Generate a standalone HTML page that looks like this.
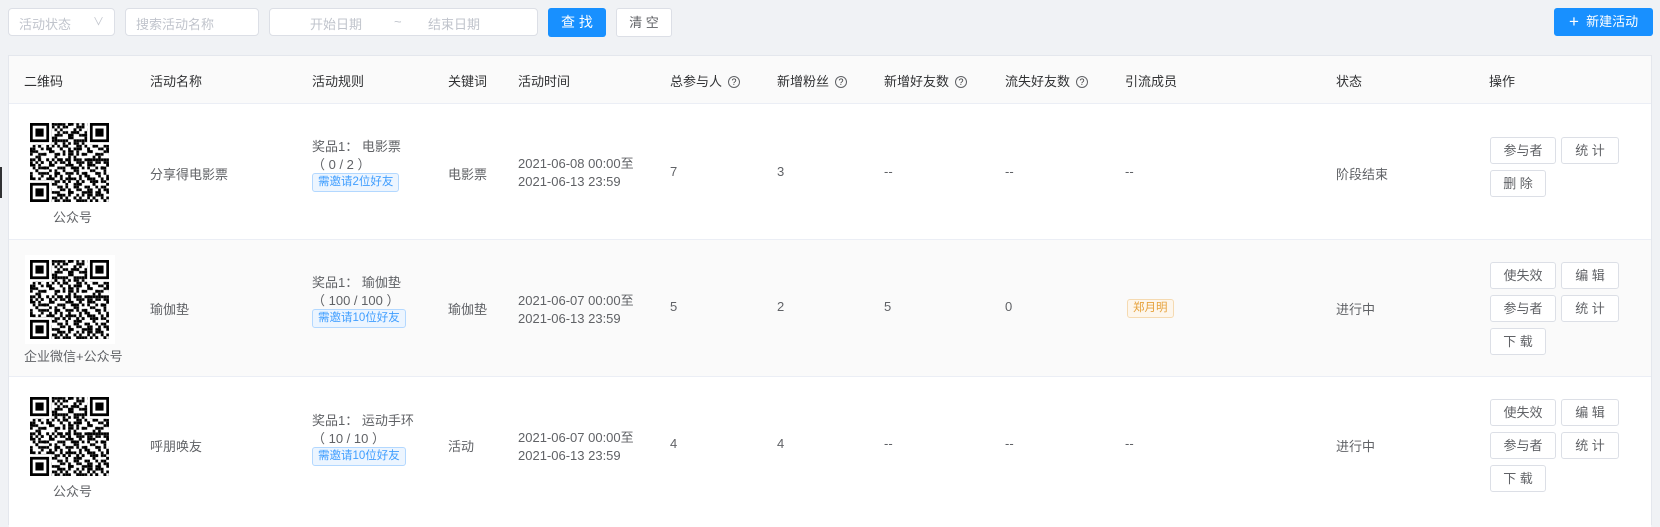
<!DOCTYPE html>
<html><head><meta charset="utf-8">
<style>
*{box-sizing:border-box;margin:0;padding:0}
body{width:1660px;height:512px;overflow:hidden;background:#f0f2f5;font-family:"Liberation Sans","Noto Sans CJK SC",sans-serif;font-size:13px;color:#606266;position:relative}
.a{position:absolute;white-space:nowrap}
.box{position:absolute;background:#fff;border:1px solid #dcdfe6;border-radius:4px}
.ph{color:#c0c4cc}
.btn{position:absolute;border:1px solid #dcdfe6;border-radius:3px;background:#fff;color:#606266;font-size:13px;text-align:center;line-height:25px;height:27px}
.table{position:absolute;left:8px;top:55px;width:1644px;height:470px;background:#fff;border:1px solid #e4e7ed}
.hd{position:absolute;left:0;top:0;width:100%;height:48px;background:#fafafa;border-bottom:1px solid #ebeef5}
.hd .a{top:15px;color:#303133}
.row{position:absolute;left:0;width:100%;border-bottom:1px solid #ebeef5}
.q{display:inline-block;width:12px;height:12px;border:1px solid #606266;border-radius:50%;font-size:9px;line-height:10px;text-align:center;margin-left:6px;vertical-align:1px;color:#303133}
.tag{position:absolute;height:19px;line-height:17px;font-size:11.5px;padding:0 5px;border-radius:3px;border:1px solid #b3d8ff;background:#ecf5ff;color:#409eff}
.tag.o{border-color:#f5dab1;background:#fdf6ec;color:#e6a23c}
</style></head><body>
<svg width="0" height="0" style="position:absolute">
<defs>
<pattern id="p1" width="7" height="5" patternUnits="userSpaceOnUse"><path d="M0 0h2v1h-2zM3 1h1v1h-1zM5 1h1v1h-1zM2 2h1v1h-1zM6 3h1v1h-1zM3 3h1v1h-1zM0 4h1v1h-1zM4 4h1v1h-1z" fill="#000"/></pattern>
<pattern id="p2" width="5" height="7" patternUnits="userSpaceOnUse" x="2" y="1"><path d="M1 0h1v1h-1zM4 1h1v1h-1zM0 2h1v1h-1zM2 3h2v1h-2zM1 5h1v1h-1zM4 5h1v1h-1zM0 6h1v1h-1zM2 6h1v1h-1z" fill="#000"/></pattern>
<pattern id="p3" width="11" height="13" patternUnits="userSpaceOnUse" x="1" y="3"><path d="M3 0h2v1h-2zM8 2h1v2h-1zM0 5h1v1h-1zM5 6h2v1h-2zM2 9h1v2h-1zM9 10h2v1h-2zM6 12h1v1h-1z" fill="#000"/></pattern>
<symbol id="qr" viewBox="0 0 29 29">
<rect width="29" height="29" fill="#fff"/>
<rect width="29" height="29" fill="url(#p1)"/><rect width="29" height="29" fill="url(#p2)"/><rect width="29" height="29" fill="url(#p3)"/>
<g><rect x="0" y="0" width="8" height="8" fill="#fff"/><rect x="21" y="0" width="8" height="8" fill="#fff"/><rect x="0" y="21" width="8" height="8" fill="#fff"/>
<path d="M0 0h7v7h-7zM1 1v5h5v-5zM2 2h3v3h-3zM22 0h7v7h-7zM23 1v5h5v-5zM24 2h3v3h-3zM0 22h7v7h-7zM1 23v5h5v-5zM2 24h3v3h-3z" fill="#000" fill-rule="evenodd"/></g>
</symbol>
</defs></svg>

<div class="box" style="left:8px;top:8px;width:107px;height:28px"><span class="a ph" style="left:10px;top:5px">活动状态</span><span class="a ph" style="left:84px;top:4px;font-size:11px">∨</span></div>
<div class="box" style="left:125px;top:8px;width:134px;height:28px"><span class="a ph" style="left:10px;top:5px">搜索活动名称</span></div>
<div class="box" style="left:269px;top:8px;width:269px;height:28px"><span class="a ph" style="left:40px;top:5px">开始日期</span><span class="a ph" style="left:124px;top:5px">~</span><span class="a ph" style="left:158px;top:5px">结束日期</span></div>
<div class="a" style="left:548px;top:8px;width:58px;height:29px;background:#1890ff;border-radius:3px;color:#fff;text-align:center;line-height:29px;font-size:14px">查 找</div>
<div class="box" style="left:616px;top:8px;width:56px;height:29px;text-align:center;line-height:27px;color:#606266;border-radius:3px">清 空</div>
<div class="a" style="left:1554px;top:8px;width:99px;height:28px;background:#1890ff;border-radius:3px;color:#fff;line-height:28px;font-size:13px;padding-left:15px"><span style="font-size:17px;vertical-align:-1px">+</span>&nbsp; 新建活动</div>

<div class="a" style="left:0;top:167px;width:2px;height:31px;background:#303133"></div>

<div class="table">
 <div class="hd">
  <span class="a" style="left:15px">二维码</span>
  <span class="a" style="left:141px">活动名称</span>
  <span class="a" style="left:303px">活动规则</span>
  <span class="a" style="left:439px">关键词</span>
  <span class="a" style="left:509px">活动时间</span>
  <span class="a" style="left:661px">总参与人<span class="q">?</span></span>
  <span class="a" style="left:768px">新增粉丝<span class="q">?</span></span>
  <span class="a" style="left:875px">新增好友数<span class="q">?</span></span>
  <span class="a" style="left:996px">流失好友数<span class="q">?</span></span>
  <span class="a" style="left:1116px">引流成员</span>
  <span class="a" style="left:1327px">状态</span>
  <span class="a" style="left:1480px">操作</span>
 </div>

 <div class="row" style="top:48px;height:136px;background:#fff">
  <svg class="a" style="left:21px;top:19px" width="79" height="79"><use href="#qr"/></svg>
  <span class="a" style="left:44px;top:103px">公众号</span>
  <span class="a" style="left:141px;top:60px">分享得电影票</span>
  <span class="a" style="left:303px;top:32px">奖品1： 电影票</span>
  <span class="a" style="left:303px;top:50px">（ 0 / 2 ）</span>
  <span class="tag" style="left:303px;top:69px">需邀请2位好友</span>
  <span class="a" style="left:439px;top:60px">电影票</span>
  <span class="a" style="left:509px;top:49px">2021-06-08 00:00至</span>
  <span class="a" style="left:509px;top:70px">2021-06-13 23:59</span>
  <span class="a" style="left:661px;top:60px">7</span>
  <span class="a" style="left:768px;top:60px">3</span>
  <span class="a" style="left:875px;top:60px">--</span>
  <span class="a" style="left:996px;top:60px">--</span>
  <span class="a" style="left:1116px;top:60px">--</span>
  <span class="a" style="left:1327px;top:60px">阶段结束</span>
  <div class="btn" style="left:1481px;top:33px;width:66px">参与者</div>
  <div class="btn" style="left:1552px;top:33px;width:58px">统 计</div>
  <div class="btn" style="left:1481px;top:66px;width:56px">删 除</div>
 </div>

 <div class="row" style="top:184px;height:137px;background:#fafafa">
  <div class="a" style="left:16px;top:15px;width:90px;height:89px;background:#fff"></div>
  <svg class="a" style="left:21px;top:20px" width="79" height="79"><use href="#qr"/></svg>
  <span class="a" style="left:15px;top:106px">企业微信+公众号</span>
  <span class="a" style="left:141px;top:59px">瑜伽垫</span>
  <span class="a" style="left:303px;top:32px">奖品1： 瑜伽垫</span>
  <span class="a" style="left:303px;top:50px">（ 100 / 100 ）</span>
  <span class="tag" style="left:303px;top:69px">需邀请10位好友</span>
  <span class="a" style="left:439px;top:59px">瑜伽垫</span>
  <span class="a" style="left:509px;top:50px">2021-06-07 00:00至</span>
  <span class="a" style="left:509px;top:71px">2021-06-13 23:59</span>
  <span class="a" style="left:661px;top:59px">5</span>
  <span class="a" style="left:768px;top:59px">2</span>
  <span class="a" style="left:875px;top:59px">5</span>
  <span class="a" style="left:996px;top:59px">0</span>
  <span class="tag o" style="left:1118px;top:59px">郑月明</span>
  <span class="a" style="left:1327px;top:59px">进行中</span>
  <div class="btn" style="left:1481px;top:22px;width:66px">使失效</div>
  <div class="btn" style="left:1552px;top:22px;width:58px">编 辑</div>
  <div class="btn" style="left:1481px;top:55px;width:66px">参与者</div>
  <div class="btn" style="left:1552px;top:55px;width:58px">统 计</div>
  <div class="btn" style="left:1481px;top:88px;width:56px">下 载</div>
 </div>

 <div class="row" style="top:321px;height:150px;background:#fff;border-bottom:none">
  <svg class="a" style="left:21px;top:20px" width="79" height="79"><use href="#qr"/></svg>
  <span class="a" style="left:44px;top:104px">公众号</span>
  <span class="a" style="left:141px;top:59px">呼朋唤友</span>
  <span class="a" style="left:303px;top:33px">奖品1： 运动手环</span>
  <span class="a" style="left:303px;top:51px">（ 10 / 10 ）</span>
  <span class="tag" style="left:303px;top:70px">需邀请10位好友</span>
  <span class="a" style="left:439px;top:59px">活动</span>
  <span class="a" style="left:509px;top:50px">2021-06-07 00:00至</span>
  <span class="a" style="left:509px;top:71px">2021-06-13 23:59</span>
  <span class="a" style="left:661px;top:59px">4</span>
  <span class="a" style="left:768px;top:59px">4</span>
  <span class="a" style="left:875px;top:59px">--</span>
  <span class="a" style="left:996px;top:59px">--</span>
  <span class="a" style="left:1116px;top:59px">--</span>
  <span class="a" style="left:1327px;top:59px">进行中</span>
  <div class="btn" style="left:1481px;top:22px;width:66px">使失效</div>
  <div class="btn" style="left:1552px;top:22px;width:58px">编 辑</div>
  <div class="btn" style="left:1481px;top:55px;width:66px">参与者</div>
  <div class="btn" style="left:1552px;top:55px;width:58px">统 计</div>
  <div class="btn" style="left:1481px;top:88px;width:56px">下 载</div>
 </div>
</div>
</body></html>
